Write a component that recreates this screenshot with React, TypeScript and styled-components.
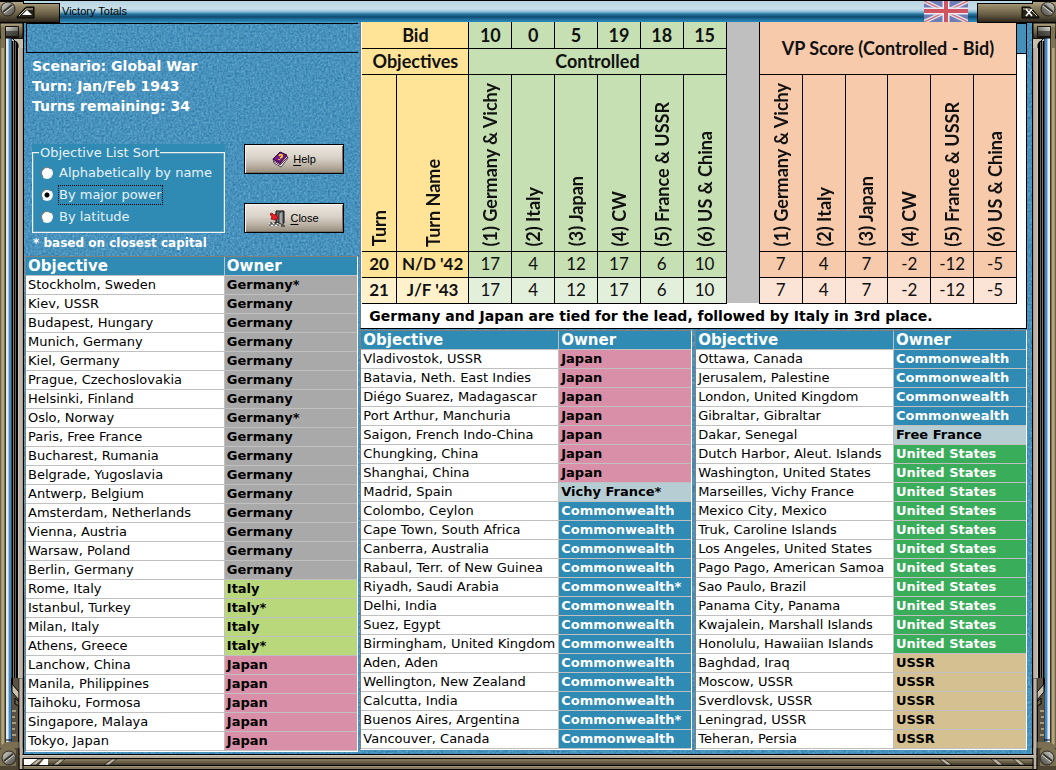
import React, { useState } from "react";
import styled, { createGlobalStyle, css } from "styled-components";

const VERDANA = `Verdana, "DejaVu Sans", sans-serif`;
const CALIBRI = `Lato, "Open Sans", sans-serif`;

const GlobalStyle = createGlobalStyle`
  *, *::before, *::after { box-sizing: border-box; }
  body { margin: 0; background: #000; }
`;

const Window = styled.div`
  position: relative;
  display: flex;
  flex-direction: column;
  min-height: 100vh;
  font-family: ${VERDANA};
  font-size: 13px;
  color: #000;
`;

const TitleBar = styled.header`
  position: relative;
  display: flex;
  justify-content: space-between;
  height: 22px;
  background: linear-gradient(#000 0 1px, #b9d5e3 1px, #c8dfe9 9px, #85b9d4 12px, #2677a4 14px, #10496d 17px, #1d6d9a 19px, #2a8aba 22px);
`;

const TitleLeft = styled.div`
  display: flex;
  align-items: center;
  gap: 2px;
`;

const TitleText = styled.h1`
  margin: 0;
  font: 400 11px/22px "Liberation Sans", Arial, sans-serif;
`;

const TitleRight = styled.div`
  display: flex;
  gap: 9px;
`;

const CapButton = styled.button`
  position: relative;
  z-index: 1;
  padding: 0;
  border: 0;
  background: none;
  display: block;
  height: 23px;
`;

const Middle = styled.div`
  display: flex;
  flex: 1;
`;

const Rail = styled.div<{ $right?: boolean }>`
  position: relative;
  flex: 0 0 24px;
  display: flex;
  flex-direction: column;
  justify-content: space-between;
  background: linear-gradient(
    ${(p) => (p.$right ? "to left" : "to right")},
    #6d6249 0 1px, #a2926c 1px 2px, #b3a480 2px 4px, #7c7052 4px 5px, #3b3426 5px 6px,
    #e5edf4 6px 8px, #9fc3e0 8px 9px, #4a86b8 9px 11px, #2b4a66 11px 12px,
    #000 12px 13px, #867856 13px 14px, #000 14px 15px, #6d6249 15px 16px, #000 16px 18px,
    #cfc8bc 18px 19px, #bcb3a6 19px 22px, #a39a8c 22px 23px, #000 23px 24px
  );
  svg { display: block; ${(p) => p.$right && "transform: scaleX(-1);"} }
`;

const BottomBar = styled.footer`
  position: relative;
  display: flex;
  justify-content: space-between;
  height: 16px;
  background: linear-gradient(
    #000 0 1px, #d3ccc0 1px 2px, #b6ac9c 2px 4px, #000 4px 5px, #80745a 5px 7px,
    #6a5f47 7px 9px, #4d4431 9px 11px, #000 11px 12px, #a29472 12px 13px, #85785a 13px 15px, #000 15px 16px
  );
  svg { display: block; margin-top: -22px; }
`;

const Content = styled.main`
  position: relative;
  flex: 1;
  display: grid;
  grid-template-columns: 1fr 2fr;
  column-gap: 2px;
  padding: 0 5px 2px 1px;
  background: #4490bb;
  isolation: isolate;
`;

const Texture = styled.svg`
  position: absolute;
  inset: 0;
  width: 100%;
  height: 100%;
  z-index: -1;
`;

const LeftColumn = styled.section`
  display: flex;
  flex-direction: column;
  justify-content: space-between;
`;

const RightColumn = styled.section`
  display: flex;
  flex-direction: column;
  justify-content: space-between;
  padding-bottom: 2px;
`;

const EmptyBar = styled.div`
  height: 30px;
  margin: 1px 0 0 1px;
  border: 1px solid #000;
  border-right: 0;
`;

const ScenarioInfo = styled.div`
  padding: 3px 7px;
  color: #fff;
  font-weight: 700;
  font-size: 14px;
  line-height: 20px;
  p { margin: 0; }
`;

const Controls = styled.div`
  display: flex;
  gap: 19px;
  padding: 25px 7px 0;
`;

const SortGroup = styled.fieldset`
  flex: 0 1 193px;
  min-width: 0;
  height: 89px;
  margin: 0;
  padding: 0;
  border: 0;
  background: #2f8bb3;
  color: #e8f2f7;
  position: relative;
  &::before {
    content: "";
    position: absolute;
    inset: 8px 0 0 0;
    border: 1px solid #f2f2f2;
    box-shadow: inset 0 0 0 1px rgba(190, 205, 212, 0.35);
  }
`;

const SortLegend = styled.legend`
  position: relative;
  float: left;
  margin-left: 7px;
  padding: 0 1px;
  background: #2f8bb3;
  line-height: 18px;
`;

const Options = styled.div`
  position: relative;
  clear: both;
  padding: 0 9px;
`;

const Option = styled.label`
  display: flex;
  align-items: center;
  gap: 6px;
  height: 22px;
  white-space: nowrap;
`;

const OptionText = styled.span<{ $focused: boolean }>`
  line-height: 18px;
  outline: ${(p) => (p.$focused ? "1px dotted #000" : "none")};
`;

const Radio = styled.input`
  appearance: none;
  flex: none;
  width: 12px;
  height: 12px;
  margin: 0;
  border-radius: 50%;
  border: 1px solid;
  border-color: #777 #eee #eee #777;
  background: #fff;
  outline: none;
  &:checked {
    background: radial-gradient(circle, #000 0 2px, #fff 3px);
  }
`;

const ButtonStack = styled.div`
  display: flex;
  flex-direction: column;
  justify-content: space-between;
  height: 89px;
`;

const ActionButton = styled.button`
  display: flex;
  align-items: center;
  justify-content: center;
  gap: 4px;
  width: 100px;
  height: 30px;
  padding: 0;
  border: 1px solid #000;
  background: linear-gradient(#ece7e0, #d9d2c8 45%, #b9b0a2 75%, #958b7b);
  box-shadow: inset 1px 1px 0 #f7f4ef, inset -1px -1px 0 #7c7263;
  color: #000;
  font: 400 11px/16px "Liberation Sans", Arial, sans-serif;
  u { text-underline-offset: 2px; }
`;

const Footnote = styled.p`
  margin: 0;
  padding: 3px 8px 5px;
  color: #fff;
  font-weight: 700;
  font-size: 12px;
  line-height: 15px;
`;

const ScorePanel = styled.div`
  display: flex;
  flex-direction: column;
  border: 1px solid #000;
  border-width: 0 1px 1px;
  border-left-color: #6d7f8a;
  background: #fff;
`;

const ScoreRow = styled.div`
  display: flex;
  padding-left: 1px;
`;

const ScoreSide = styled.div`
  flex: 0 0 9px;
  background: linear-gradient(#4490bb 0 29px, #000 29px 30px, #fff 30px);
  border-top: 2px solid #000;
`;

const ScoreTable = styled.table`
  flex: 1;
  min-width: 0;
  border-collapse: collapse;
  table-layout: fixed;
  font-family: ${CALIBRI};
  font-size: 18px;
  line-height: 22px;
  color: #111;
`;

type Tone = "gold" | "goldLight" | "green" | "greenLight" | "peach" | "peachLight" | "gray";
const tones: Record<Tone, string> = {
  gold: "#ffe498",
  goldLight: "#fff1cc",
  green: "#c6dfb3",
  greenLight: "#e2efda",
  peach: "#f7caac",
  peachLight: "#fbe4d6",
  gray: "#bfbfbf",
};

const cell = css<{ $tone: Tone; $edge?: boolean }>`
  height: 26px;
  padding: 0;
  text-align: center;
  white-space: nowrap;
  background: ${(p) => tones[p.$tone]};
  border: 1px solid #000;
  border-width: ${(p) => (p.$tone === "gray" ? "0" : "0 1px 1px 1px")};
  ${(p) => p.$edge && "border-left-width: 0;"}
`;
const ScoreHead = styled.th<{ $tone: Tone; $edge?: boolean }>`${cell} font-weight: 700;`;
const RowHead = styled(ScoreHead)`font-size: 17px;`;
const ScoreCell = styled.td<{ $tone: Tone; $edge?: boolean }>`${cell} font-size: 17px;`;

const VerticalHead = styled(ScoreHead)`
  height: 177px;
  vertical-align: bottom;
`;

const VerticalText = styled.span`
  display: inline-block;
  writing-mode: vertical-rl;
  transform: rotate(180deg);
  padding-top: 4px;
  line-height: 22px;
  vertical-align: bottom;
`;

const Standing = styled.p`
  margin: 0;
  padding: 3px 8px;
  font-weight: 700;
  font-size: 14px;
  line-height: 18px;
`;

const TablePair = styled.div`
  display: grid;
  grid-template-columns: 1fr 1fr;
  gap: 3px;
`;

const ObjectiveTable = styled.table`
  width: 100%;
  table-layout: fixed;
  border-collapse: separate;
  border-spacing: 0;
  border: 1px solid #fff;
  border-top-color: #857f7b;
  border-left-color: #857f7b;
  font-size: 13px;
  line-height: 18px;
  white-space: nowrap;
  th, td {
    height: 19px;
    padding: 0 2px;
    text-align: left;
    border-bottom: 1px solid #c0c0c0;
    overflow: hidden;
  }
  th:first-child, td:first-child {
    width: 60%;
    border-right: 1px solid #c0c0c0;
  }
  th {
    background: #2f8bb3;
    color: #fff;
    font-size: 15px;
  }
  td { background: #fff; }
`;

type Power = "Germany" | "Italy" | "Japan" | "Vichy France" | "Commonwealth" | "Free France" | "United States" | "USSR";
const powers: Record<Power, [string, string]> = {
  Germany: ["#a9a9a9", "#000"],
  Italy: ["#b9d77b", "#000"],
  Japan: ["#d98fa8", "#000"],
  "Vichy France": ["#b7cdd4", "#000"],
  Commonwealth: ["#2f8bb3", "#fff"],
  "Free France": ["#b7cdd4", "#000"],
  "United States": ["#3aad5b", "#fff"],
  USSR: ["#d5c092", "#000"],
};

const OwnerCell = styled.td<{ $power: Power }>`
  && {
    background: ${(p) => powers[p.$power][0]};
    color: ${(p) => powers[p.$power][1]};
    font-weight: 700;
  }
`;

type Item = [string, string];
const own = (owner: string, names: string[]): Item[] =>
  names.map((n) => (n.endsWith("*") ? [n.slice(0, -1), owner + "*"] : [n, owner]));

const listA: Item[] = [
  ...own("Germany", ["Stockholm, Sweden*", "Kiev, USSR", "Budapest, Hungary", "Munich, Germany", "Kiel, Germany", "Prague, Czechoslovakia", "Helsinki, Finland", "Oslo, Norway*", "Paris, Free France", "Bucharest, Rumania", "Belgrade, Yugoslavia", "Antwerp, Belgium", "Amsterdam, Netherlands", "Vienna, Austria", "Warsaw, Poland", "Berlin, Germany"]),
  ...own("Italy", ["Rome, Italy", "Istanbul, Turkey*", "Milan, Italy", "Athens, Greece*"]),
  ...own("Japan", ["Lanchow, China", "Manila, Philippines", "Taihoku, Formosa", "Singapore, Malaya", "Tokyo, Japan"]),
];
const listB: Item[] = [
  ...own("Japan", ["Vladivostok, USSR", "Batavia, Neth. East Indies", "Diégo Suarez, Madagascar", "Port Arthur, Manchuria", "Saigon, French Indo-China", "Chungking, China", "Shanghai, China"]),
  ...own("Vichy France", ["Madrid, Spain*"]),
  ...own("Commonwealth", ["Colombo, Ceylon", "Cape Town, South Africa", "Canberra, Australia", "Rabaul, Terr. of New Guinea", "Riyadh, Saudi Arabia*", "Delhi, India", "Suez, Egypt", "Birmingham, United Kingdom", "Aden, Aden", "Wellington, New Zealand", "Calcutta, India", "Buenos Aires, Argentina*", "Vancouver, Canada"]),
];
const listC: Item[] = [
  ...own("Commonwealth", ["Ottawa, Canada", "Jerusalem, Palestine", "London, United Kingdom", "Gibraltar, Gibraltar"]),
  ...own("Free France", ["Dakar, Senegal"]),
  ...own("United States", ["Dutch Harbor, Aleut. Islands", "Washington, United States", "Marseilles, Vichy France", "Mexico City, Mexico", "Truk, Caroline Islands", "Los Angeles, United States", "Pago Pago, American Samoa", "Sao Paulo, Brazil", "Panama City, Panama", "Kwajalein, Marshall Islands", "Honolulu, Hawaiian Islands"]),
  ...own("USSR", ["Baghdad, Iraq", "Moscow, USSR", "Sverdlovsk, USSR", "Leningrad, USSR", "Teheran, Persia"]),
];

function Objectives({ items }: { items: Item[] }) {
  return (
    <ObjectiveTable>
      <thead>
        <tr><th scope="col">Objective</th><th scope="col">Owner</th></tr>
      </thead>
      <tbody>
        {items.map(([name, owner]) => (
          <tr key={name}>
            <td>{name}</td>
            <OwnerCell $power={owner.replace("*", "") as Power}>{owner}</OwnerCell>
          </tr>
        ))}
      </tbody>
    </ObjectiveTable>
  );
}

const Col = styled.col<{ $share: number }>`width: ${(p) => p.$share}%;`;

const bids = [10, 0, 5, 19, 18, 15];
const sides = ["(1) Germany & Vichy", "(2) Italy", "(3) Japan", "(4) CW", "(5) France & USSR", "(6) US & China"];
const turns = [
  { turn: 20, name: "N/D '42", light: false },
  { turn: 21, name: "J/F '43", light: true },
];
const controlled = [17, 4, 12, 17, 6, 10];
const scores = [7, 4, 7, -2, -12, -5];

function Scores() {
  return (
    <ScoreTable>
      <colgroup>
        <Col $share={5.2} />
        <Col $share={11.1} />
        {bids.map((_, i) => <Col key={i} $share={6.55} />)}
        <Col $share={5.1} />
        {bids.map((_, i) => <Col key={i} $share={6.55} />)}
      </colgroup>
      <thead>
        <tr>
          <ScoreHead $tone="gold" $edge colSpan={2}>Bid</ScoreHead>
          {bids.map((b, i) => <ScoreHead key={i} $tone="green">{b}</ScoreHead>)}
          <ScoreHead $tone="gray" rowSpan={5} aria-hidden="true" />
          <ScoreHead $tone="peach" rowSpan={2} colSpan={6}>VP Score (Controlled - Bid)</ScoreHead>
        </tr>
        <tr>
          <ScoreHead $tone="gold" $edge colSpan={2}>Objectives</ScoreHead>
          <ScoreHead $tone="green" colSpan={6}>Controlled</ScoreHead>
        </tr>
        <tr>
          <VerticalHead $tone="gold" $edge><VerticalText>Turn</VerticalText></VerticalHead>
          <VerticalHead $tone="gold"><VerticalText>Turn Name</VerticalText></VerticalHead>
          {sides.map((s) => <VerticalHead key={s} $tone="green"><VerticalText>{s}</VerticalText></VerticalHead>)}
          {sides.map((s) => <VerticalHead key={s + "vp"} $tone="peach"><VerticalText>{s}</VerticalText></VerticalHead>)}
        </tr>
        {turns.map((t) => (
          <tr key={t.turn}>
            <RowHead $tone={t.light ? "goldLight" : "gold"} $edge>{t.turn}</RowHead>
            <RowHead $tone={t.light ? "goldLight" : "gold"}>{t.name}</RowHead>
            {controlled.map((c, i) => <ScoreCell key={i} $tone={t.light ? "greenLight" : "green"}>{c}</ScoreCell>)}
            {scores.map((c, i) => <ScoreCell key={i} $tone={t.light ? "peachLight" : "peach"}>{c}</ScoreCell>)}
          </tr>
        ))}
      </thead>
    </ScoreTable>
  );
}

const Definitions = styled.svg`position: absolute;`;

function Metal() {
  return (
    <Definitions width="0" height="0" aria-hidden="true">
      <defs>
        <linearGradient id="brass" x1="0" y1="0" x2="0" y2="1">
          <stop offset="0" stopColor="#b3a684" />
          <stop offset=".25" stopColor="#8f8262" />
          <stop offset=".6" stopColor="#6b6047" />
          <stop offset="1" stopColor="#2d271b" />
        </linearGradient>
        <linearGradient id="steel" x1="0" y1="0" x2="1" y2="1">
          <stop offset="0" stopColor="#d9d9d5" />
          <stop offset=".5" stopColor="#8b8a84" />
          <stop offset="1" stopColor="#3f3d38" />
        </linearGradient>
      </defs>
    </Definitions>
  );
}

function TopCap({ close }: { close?: boolean }) {
  const w = close ? 79 : 60;
  return (
    <svg width={w} height="23" viewBox={`0 0 ${w} 23`} display="block">
      <g transform={close ? `translate(${w} 0) scale(-1 1)` : undefined}>
        <path d={`M0 1H24V3H${w}V23H0Z`} fill="#000" />
        <path d={`M0 2H23V4H${w - 1}V22H0Z`} fill="url(#brass)" />
        <path d="M17 17L25 8Q26 7 28 7H34V18H17Z" fill="#28231a" stroke="#000" />
        <path d="M19 16L26 9H33" fill="none" stroke="#d2c9b1" />
        {!close && <path d="M22 15L27 10L32 15Z" fill="#fff" />}
        <circle cx="8" cy="9" r="7" fill="url(#steel)" stroke="#2a261d" />
        <path d="M3 12L12 5" stroke="#37342e" strokeWidth="2" />
        <path d="M4 13L13 6" stroke="#dad8d0" />
      </g>
      {close && <path d="M49 9L55 16M55 9L49 16" stroke="#fff" strokeWidth="1.6" />}
    </svg>
  );
}

function RailTop() {
  return (
    <svg width="24" height="26" viewBox="0 0 24 26">
      <path d="M0 1H23V17H15L13 16H0Z" fill="url(#brass)" stroke="#000" />
      <path d="M1 5H5V26H1Z" fill="#7f7354" />
      <rect x="5" y="4" width="14" height="12" rx="1" fill="#15130f" />
      <rect x="6" y="5" width="12" height="9" fill="url(#steel)" />
      <rect x="6" y="9" width="12" height="5" fill="#35322e" opacity=".7" />
      <path d="M12 17H23V26H18V21L16 19H12Z" fill="#c8c0ae" />
      <path d="M13 17L18 22V26" fill="none" stroke="#000" />
    </svg>
  );
}

function RailBottom() {
  return (
    <svg width="24" height="76" viewBox="0 0 24 76">
      <path d="M12 0H19V76H12Z" fill="#5a5140" />
      <path d="M12 0V8L19 16V76" fill="none" stroke="#000" strokeWidth="2" />
      <path d="M12 6L19 14V22L12 14Z" fill="#c9c0ac" stroke="#000" />
      <path d="M15 20L19 24V28L15 26Z" fill="#6d624a" stroke="#000" />
      <path d="M12 33H16M12 39H15M12 45H16M12 51H15M12 57H16" stroke="#a89b7b" strokeWidth="2" />
      <path d="M0 68L6 64H20V76H0Z" fill="#7b6f53" />
      <path d="M6 62H12" stroke="#000" />
      <path d="M19 0H23V76H19Z" fill="#bcb3a6" stroke="#000" strokeWidth=".6" />
    </svg>
  );
}

function BottomCorner({ right }: { right?: boolean }) {
  return (
    <svg width="120" height="38" viewBox="0 0 120 38" aria-hidden="true">
      <g transform={right ? "translate(120 0) scale(-1 1)" : undefined}>
        <path d="M0 16H19V38H0Z" fill="#4d4431" />
        <path d="M0 18Q8 10 16 18V34H0Z" fill="#7c7053" />
        <path d="M21 16V37" stroke="#bcb3a6" strokeWidth="3" />
        <path d="M19 16V37M23 27V37" stroke="#000" />
        {!right && <path d="M24 27H38L30 33H24ZM44 27H48V33H39Z" fill="#fff" />}
        <path d="M38 27L31 33H36L43 27ZM60 27L53 33H58L65 27ZM112 27L104 33H109L117 27Z" fill="#bdb3a1" stroke="#000" strokeWidth=".6" />
        <circle cx="9" cy="26" r="7" fill="url(#steel)" stroke="#2a261d" />
        <path d="M4 29L13 22" stroke="#37342e" strokeWidth="2" />
        <path d="M5 30L14 23" stroke="#d3d1ca" />
      </g>
    </svg>
  );
}

const Flag = styled.svg`margin-top: 1px;`;

function UnionFlag() {
  return (
    <Flag width="44" height="21" viewBox="0 0 44 21" role="img" aria-label="United Kingdom">
      <rect width="44" height="21" fill="#6f7db4" />
      <path d="M0 0L44 21M44 0L0 21" stroke="#e4e2ee" strokeWidth="4" />
      <path d="M0 0L44 21M44 0L0 21" stroke="#d0747e" strokeWidth="1.5" />
      <path d="M22 0V21M0 10H44" stroke="#eceaf2" strokeWidth="7" />
      <path d="M22 0V21M0 10H44" stroke="#cf5460" strokeWidth="4" />
    </Flag>
  );
}

function BookIcon() {
  return (
    <svg width="17" height="17" viewBox="0 0 17 17" aria-hidden="true">
      <path d="M1 8L8 13L15 5L16 7L9 16L2 12Z" fill="#fff" stroke="#222" strokeWidth=".8" />
      <path d="M1 8L8 1L15 4L8 12Z" fill="#7d1687" stroke="#2d0631" />
      <path d="M2 10L8 14L16 6" fill="none" stroke="#7d1687" />
      <path d="M7 5Q8 3 10 4Q11 6 8 7M7 8V9" fill="none" stroke="#ffe928" strokeWidth="1.4" />
    </svg>
  );
}

function DoorIcon() {
  return (
    <svg width="17" height="17" viewBox="0 0 17 17" aria-hidden="true">
      <path d="M7 1H15V13H7Z" fill="#666" stroke="#111" />
      <path d="M10 3L14 1V15L10 13Z" fill="#a5a5a5" stroke="#222" strokeWidth=".8" />
      <path d="M1 4L3 3L5 5L7 4L9 8L7 10L2 9L3 7Z" fill="#ee1c24" stroke="#6d0005" strokeWidth=".7" />
      <path d="M0 13H10V16H0Z" fill="#f4f4f4" />
      <path d="M1 13H3M5 13H7M9 13H10M0 15H2M4 15H6M8 15H10M12 16H16M2 14H4M6 14H8" stroke="#111" />
    </svg>
  );
}

const sortModes = ["Alphabetically by name", "By major power", "By latitude"];

export default function App() {
  const [mode, setMode] = useState(1);
  return (
    <Window>
      <GlobalStyle />
      <Metal />
      <TitleBar>
        <TitleLeft>
          <CapButton type="button" aria-label="Roll up"><TopCap /></CapButton>
          <TitleText>Victory Totals</TitleText>
        </TitleLeft>
        <TitleRight>
          <UnionFlag />
          <CapButton type="button" aria-label="Close window"><TopCap close /></CapButton>
        </TitleRight>
      </TitleBar>
      <Middle>
        <Rail><RailTop /><RailBottom /></Rail>
        <Content>
          <Texture aria-hidden="true">
            <filter id="grain" x="0" y="0" width="100%" height="100%" colorInterpolationFilters="sRGB">
              <feTurbulence type="fractalNoise" baseFrequency="0.45" numOctaves="3" seed="4" />
              <feColorMatrix values="0.3 0 0 0 0.13  0.28 0 0 0 0.43  0.22 0 0 0 0.63  0 0 0 0 1" />
            </filter>
            <rect width="100%" height="100%" filter="url(#grain)" />
          </Texture>
          <LeftColumn>
            <div>
              <EmptyBar />
              <ScenarioInfo>
                <p>Scenario: Global War</p>
                <p>Turn: Jan/Feb 1943</p>
                <p>Turns remaining: 34</p>
              </ScenarioInfo>
              <Controls>
                <SortGroup>
                  <SortLegend>Objective List Sort</SortLegend>
                  <Options>
                    {sortModes.map((m, i) => (
                      <Option key={m}>
                        <Radio type="radio" name="sort" checked={mode === i} onChange={() => setMode(i)} />
                        <OptionText $focused={mode === i}>{m}</OptionText>
                      </Option>
                    ))}
                  </Options>
                </SortGroup>
                <ButtonStack>
                  <ActionButton type="button"><BookIcon /><span><u>H</u>elp</span></ActionButton>
                  <ActionButton type="button"><DoorIcon /><span><u>C</u>lose</span></ActionButton>
                </ButtonStack>
              </Controls>
              <Footnote>* based on closest capital</Footnote>
            </div>
            <Objectives items={listA} />
          </LeftColumn>
          <RightColumn>
            <ScorePanel>
              <ScoreRow>
                <Scores />
                <ScoreSide />
              </ScoreRow>
              <Standing>Germany and Japan are tied for the lead, followed by Italy in 3rd place.</Standing>
            </ScorePanel>
            <TablePair>
              <Objectives items={listB} />
              <Objectives items={listC} />
            </TablePair>
          </RightColumn>
        </Content>
        <Rail $right><RailTop /><RailBottom /></Rail>
      </Middle>
      <BottomBar><BottomCorner /><BottomCorner right /></BottomBar>
    </Window>
  );
}
